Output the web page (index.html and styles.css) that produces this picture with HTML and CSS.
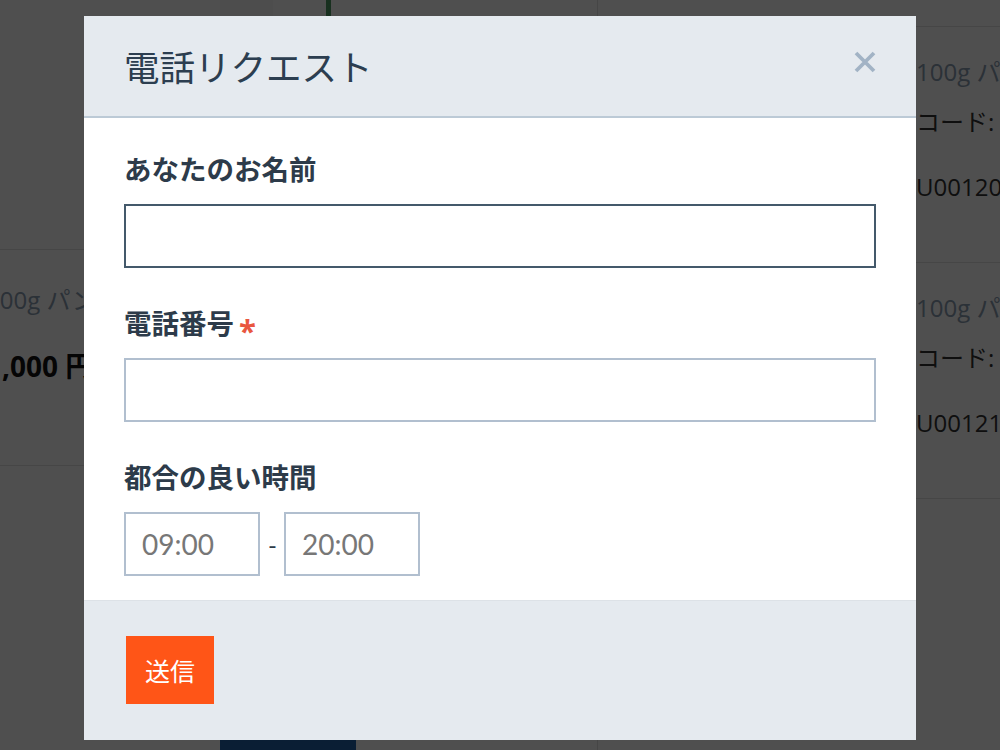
FILE: index.html
```html
<!DOCTYPE html>
<html lang="ja">
<head>
<meta charset="utf-8">
<title>電話リクエスト</title>
<link rel="stylesheet" href="styles.css">
</head>
<body>
<div class="page">
  <div class="col-left">
    <div class="lrow lrow-top">
      <div class="thumb thumb-green"></div>
    </div>
    <div class="lrow">
      <div class="ltext">
        <p class="pname">100g パン粉</p>
        <p class="price">1,000 円</p>
      </div>
    </div>
    <div class="lrow lrow-bottom">
      <div class="thumb thumb-navy"></div>
    </div>
  </div>
  <div class="col-right">
    <div class="rrow rrow-top"></div>
    <div class="rrow">
      <div class="rthumb"></div>
      <div class="rtext">
        <p class="pname">100g パン粉</p>
        <p class="code">コード: U00120</p>
        <p class="sku">U00120</p>
      </div>
    </div>
    <div class="rrow">
      <div class="rthumb"></div>
      <div class="rtext">
        <p class="pname">100g パン粉</p>
        <p class="code">コード: U00121</p>
        <p class="sku">U00121</p>
      </div>
    </div>
  </div>
</div>

<div class="overlay">
  <div class="modal">
    <div class="modal-header">
      <h2 class="modal-title">電話リクエスト</h2>
      <button class="close" type="button" aria-label="閉じる">
        <svg width="22" height="22" viewBox="0 0 22 22"><path d="M2 2 L20 20 M20 2 L2 20" stroke="#a2b3c5" stroke-width="3.8" fill="none"/></svg>
      </button>
    </div>
    <div class="modal-body">
      <div class="field">
        <label class="label">あなたのお名前</label>
        <div class="input input-focus"></div>
      </div>
      <div class="field">
        <label class="label">電話番号<span class="req">*</span></label>
        <div class="input"></div>
      </div>
      <div class="field">
        <label class="label">都合の良い時間</label>
        <div class="time-row">
          <div class="input time">09:00</div>
          <span class="sep">-</span>
          <div class="input time">20:00</div>
        </div>
      </div>
    </div>
    <div class="modal-footer">
      <button class="submit" type="button">送信</button>
    </div>
  </div>
</div>
</body>
</html>
```

FILE: styles.css
```css
* { box-sizing: border-box; margin: 0; padding: 0; }
html, body { width: 1000px; height: 750px; overflow: hidden; }
body {
  font-family: "Lato", "Noto Sans CJK JP", sans-serif;
  background: #fff;
  color: #333;
  position: relative;
}

/* background page */
.page {
  display: grid;
  grid-template-columns: 597px 403px;
  height: 750px;
  font-family: "Open Sans", "Noto Sans CJK JP", sans-serif;
  white-space: nowrap;
}
.col-left { overflow: hidden; }
.col-right { border-left: 1px solid #e3e3e3; overflow: hidden; }

.lrow { height: 216px; border-bottom: 1px solid #e0e0e0; }
.lrow-top { height: 250px; }
.lrow-bottom { border-bottom: none; height: 284px; padding-top: 24px; }
.thumb { margin-left: 220px; width: 136px; }
.thumb-green {
  height: 249px;
  background: linear-gradient(90deg, #f7f7f7 0 53px, #fff 53px 106px, #4d9b64 106px 111px, #fff 111px);
}
.thumb-navy { height: 300px; background: #2162a8; }

.ltext { margin-left: -14px; padding-top: 34px; }
.pname { font-size: 24px; line-height: 32px; color: #8a9db2; }
.price { font-size: 28px; line-height: 40px; font-weight: 700; color: #111; margin-top: 30px; }

.rrow { height: 236px; border-bottom: 1px solid #e0e0e0; display: grid; grid-template-columns: 318px 1fr; padding-top: 20px; }
.rrow-top { height: 27px; padding: 0; }
.rtext { min-width: 0; }
.rtext .pname { line-height: 50px; }
.code { font-size: 24px; line-height: 50px; color: #333; }
.sku { font-size: 24px; line-height: 50px; color: #333; margin-top: 15px; }

/* overlay + modal */
.overlay {
  position: fixed;
  inset: 0;
  background: rgba(0, 0, 0, 0.69);
  display: flex;
  justify-content: center;
  align-items: flex-start;
  padding-top: 16px;
}
.modal {
  width: 832px;
  background: #fff;
  display: flex;
  flex-direction: column;
}
.modal-header {
  height: 102px;
  background: #e5eaef;
  border-bottom: 2px solid #bccad6;
  display: flex;
  align-items: center;
  justify-content: space-between;
  padding: 0 40px 0 40px;
}
.modal-title {
  font-family: "Noto Sans CJK JP", sans-serif;
  font-weight: 400;
  font-size: 35.5px;
  line-height: 44px;
  color: #2c3e50;
}
.close {
  border: none;
  background: none;
  width: 22px;
  height: 22px;
  align-self: flex-start;
  margin-top: 35px;
  display: block;
}
.close svg { display: block; }

.modal-body { padding: 31px 40px 24px; }
.field + .field { margin-top: 35px; }
.label {
  display: block;
  font-family: "Noto Sans CJK JP", sans-serif;
  font-weight: 700;
  font-size: 27.5px;
  line-height: 38px;
  height: 38px;
  color: #2d3b4a;
  margin-bottom: 17px;
}
.req {
  color: #e9573f;
  margin-left: 5px;
  font-family: "Open Sans", sans-serif;
  font-weight: 700;
  font-size: 31px;
  line-height: 20px;
  vertical-align: -8px;
}
.input {
  height: 64px;
  border: 2px solid #b1bfcf;
  background: #fff;
}
.input-focus { border-color: #44596b; }

.time-row { display: flex; align-items: center; gap: 8px; }
.time {
  width: 136px;
  padding-left: 16px;
  font-family: "Lato", sans-serif;
  font-size: 28px;
  line-height: 60px;
  color: #777;
}
.sep {
  width: 8px;
  text-align: center;
  font-size: 24px;
  color: #2d3b4a;
}

.modal-footer {
  background: #e5eaef;
  border-top: 1px solid #dde2e7;
  padding: 35px 42px 36px;
}
.submit {
  display: block;
  width: 88px;
  height: 68px;
  border: none;
  background: #ff5517;
  color: #fff;
  font-family: "Noto Sans CJK JP", sans-serif;
  font-size: 25px;
  font-weight: 400;
}
```
